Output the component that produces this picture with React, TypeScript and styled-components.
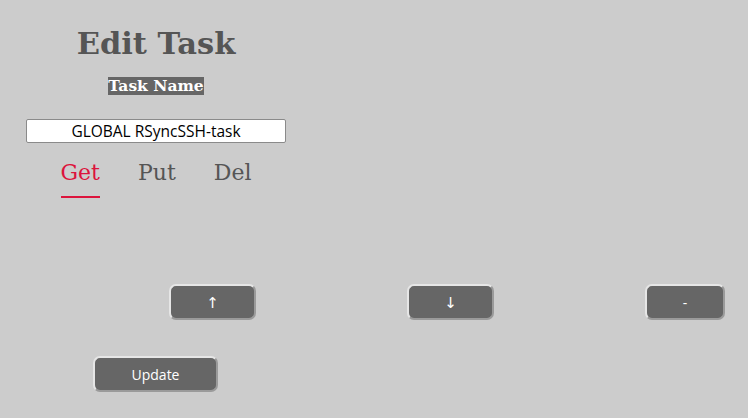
import React, { useState } from "react";
import styled, { createGlobalStyle } from "styled-components";

const Global = createGlobalStyle`
  html, body { margin: 0; padding: 0; }
  body { background: #cccccc; width: 748px; height: 418px; overflow: hidden; }
`;

const Page = styled.div`
  width: 748px;
  height: 418px;
  box-sizing: border-box;
  display: flex;
  flex-direction: column;
`;

const Head = styled.div`
  width: 260px;
  margin-left: 26px;
  display: flex;
  flex-direction: column;
  align-items: center;
`;

const Title = styled.h1`
  margin: 24px 0 0;
  font-family: "DejaVu Serif", serif;
  font-weight: bold;
  font-size: 30.5px;
  line-height: 38px;
  color: #555555;
`;

const Label = styled.span`
  margin-top: 15px;
  font-family: "DejaVu Serif", serif;
  font-weight: bold;
  font-size: 15.5px;
  line-height: 18px;
  color: #ffffff;
  background: #666666;
`;

const NameInput = styled.input`
  margin-top: 24px;
  width: 260px;
  height: 24px;
  box-sizing: border-box;
  border: 1px solid #8a8a8a;
  border-radius: 2px;
  background: #ffffff;
  text-align: center;
  font-family: "Open Sans", sans-serif;
  font-size: 15.5px;
  color: #000;
  padding: 0;
  outline: none;
`;

const Tabs = styled.div`
  display: flex;
  gap: 38px;
  margin-top: 17px;
`;

const Tab = styled.button<{ $active?: boolean }>`
  background: none;
  border: none;
  padding: 0 0 10px;
  font-family: "DejaVu Serif", serif;
  font-size: 22px;
  line-height: 26px;
  color: ${(p) => (p.$active ? "#dc143c" : "#555555")};
  border-bottom: 2px solid ${(p) => (p.$active ? "#dc143c" : "transparent")};
  cursor: pointer;
`;

const Row = styled.div`
  display: flex;
  gap: 151px;
  margin-top: 86px;
  margin-left: 169px;
`;

const Btn = styled.button<{ $w: number }>`
  width: ${(p) => p.$w}px;
  height: 36px;
  box-sizing: border-box;
  background: #666666;
  color: #ffffff;
  border: 2px solid;
  border-color: #e6e6e6 #9a9a9a #9a9a9a #e6e6e6;
  border-radius: 7px;
  font-family: "Open Sans", sans-serif;
  font-size: 14px;
  padding: 0;
  cursor: pointer;
`;

const Glyph = styled.span`
  font-family: "DejaVu Sans", sans-serif;
  font-size: 15px;
  line-height: 1;
`;

const Footer = styled.div`
  margin-top: 36px;
  margin-left: 93px;
`;

export default function App() {
  const [tab, setTab] = useState("Get");
  return (
    <Page>
      <Global />
      <Head>
        <Title>Edit Task</Title>
        <Label>Task Name</Label>
        <NameInput defaultValue="GLOBAL RSyncSSH-task" />
        <Tabs>
          {["Get", "Put", "Del"].map((t) => (
            <Tab key={t} $active={tab === t} onClick={() => setTab(t)}>
              {t}
            </Tab>
          ))}
        </Tabs>
      </Head>
      <Row>
        <Btn $w={87}>
          <Glyph>↑</Glyph>
        </Btn>
        <Btn $w={87}>
          <Glyph>↓</Glyph>
        </Btn>
        <Btn $w={80}>-</Btn>
      </Row>
      <Footer>
        <Btn $w={125}>Update</Btn>
      </Footer>
    </Page>
  );
}
